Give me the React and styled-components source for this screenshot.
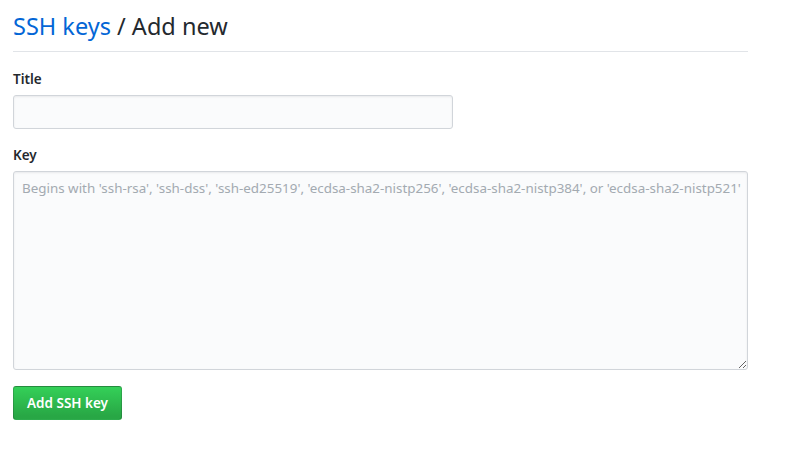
import React, { useState } from "react";
import styled, { createGlobalStyle } from "styled-components";

const GlobalStyle = createGlobalStyle`
  body {
    margin: 0;
    background: #fff;
    font-family: "Noto Sans", "Liberation Sans", sans-serif;
    font-size: 14px;
    color: #24292e;
  }
`;

function App() {
  const [title, setTitle] = useState("");
  const [key, setKey] = useState("");

  return (
    <Page>
      <GlobalStyle />
      <Subhead>
        <Heading>
          <HeadLink href="#">SSH keys</HeadLink> / Add new
        </Heading>
      </Subhead>
      <form onSubmit={(e) => e.preventDefault()}>
        <FormGroup>
          <Label htmlFor="title">Title</Label>
          <TitleInput
            id="title"
            type="text"
            value={title}
            onChange={(e) => setTitle(e.target.value)}
          />
        </FormGroup>
        <FormGroup>
          <Label htmlFor="key">Key</Label>
          <KeyArea
            id="key"
            value={key}
            placeholder="Begins with 'ssh-rsa', 'ssh-dss', 'ssh-ed25519', 'ecdsa-sha2-nistp256', 'ecdsa-sha2-nistp384', or 'ecdsa-sha2-nistp521'"
            onChange={(e) => setKey(e.target.value)}
          />
        </FormGroup>
        <SubmitBtn type="submit">Add SSH key</SubmitBtn>
      </form>
    </Page>
  );
}

const Page = styled.div`
  width: 735px;
  padding: 9px 13px;
`;

const Subhead = styled.div`
  border-bottom: 1px solid #e1e4e8;
  padding-bottom: 8px;
  margin-bottom: 17px;
`;

const Heading = styled.h2`
  margin: 0;
  font-size: 23.5px;
  font-weight: 400;
  line-height: 34px;
  color: #24292e;
`;

const HeadLink = styled.a`
  color: #0366d6;
  text-decoration: none;
`;

const FormGroup = styled.div`
  margin-bottom: 16px;
`;

const Label = styled.label`
  display: block;
  font-weight: 600;
  font-size: 13.5px;
  line-height: 20px;
  margin-bottom: 6px;
`;

const fieldStyle = `
  box-sizing: border-box;
  display: block;
  font-family: inherit;
  font-size: 14px;
  line-height: 20px;
  color: #24292e;
  background-color: #fafbfc;
  border: 1px solid #d1d5da;
  border-radius: 3px;
  box-shadow: inset 0 1px 2px rgba(27, 31, 35, 0.075);
  padding: 6px 8px;
  outline: none;
`;

const TitleInput = styled.input`
  ${fieldStyle}
  width: 440px;
  height: 34px;
`;

const KeyArea = styled.textarea`
  ${fieldStyle}
  width: 735px;
  height: 199px;
  padding-right: 3px;
  resize: vertical;
  &::placeholder {
    color: #a3aab1;
    font-size: 13.4px;
  }
`;

const SubmitBtn = styled.button`
  box-sizing: border-box;
  height: 34px;
  padding: 6px 13px;
  font-family: inherit;
  font-size: 13.5px;
  font-weight: 600;
  line-height: 20px;
  color: #fff;
  background-image: linear-gradient(-180deg, #34d058 0%, #28a745 90%);
  border: 1px solid rgba(27, 31, 35, 0.2);
  border-radius: 3px;
  cursor: pointer;
`;

export default App;
